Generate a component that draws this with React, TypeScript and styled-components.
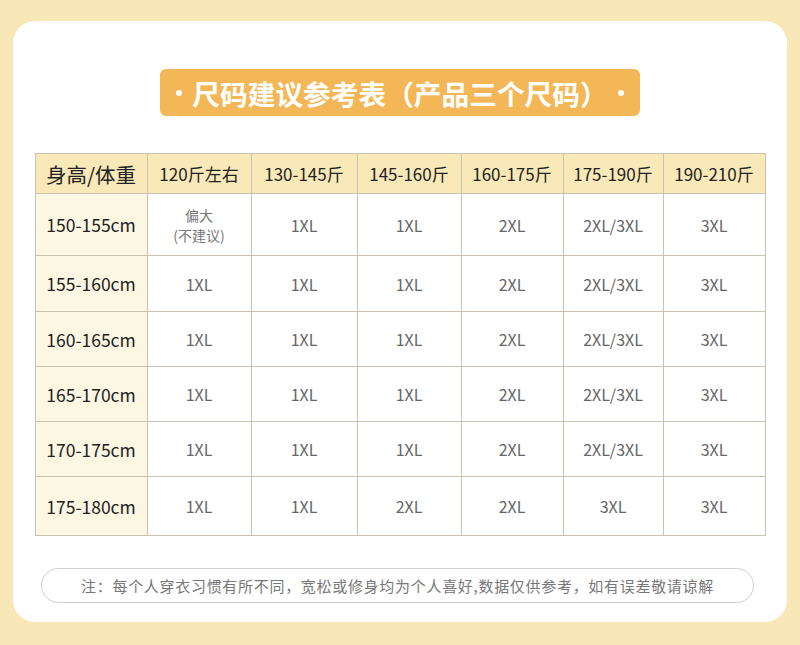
import React from 'react';
import styled, { createGlobalStyle } from 'styled-components';

const GlobalStyle = createGlobalStyle`
  html, body {
    margin: 0;
    padding: 0;
    background: #f8e7b7;
  }
  body {
    font-family: "Noto Sans CJK SC", "Noto Sans", sans-serif;
  }
`

const Page = styled.div`
  width: 800px;
  height: 645px;
  box-sizing: border-box;
  padding: 21px 13px 23px;
  background: #f8e7b7;
`

const Card = styled.div`
  height: 601px;
  box-sizing: border-box;
  background: #fff;
  border-radius: 22px;
  padding: 48px 22px 0;
  display: flex;
  flex-direction: column;
  align-items: center;
`

const Badge = styled.div`
  width: 480px;
  height: 47px;
  box-sizing: border-box;
  background: #f4b757;
  border-radius: 6px;
  color: #fff;
  font-size: 27.7px;
  font-weight: 700;
  display: flex;
  align-items: center;
  justify-content: center;
  gap: 10px;
  margin-bottom: 37px;
`

const Dot = styled.span`
  width: 6px;
  height: 6px;
  border-radius: 50%;
  background: #fff;
  flex: none;
`

const Table = styled.table`
  border-collapse: collapse;
  table-layout: fixed;
  width: 730px;
  margin-bottom: 32px;
`

const HeadCell = styled.th<{ $main?: boolean }>`
  height: 39px;
  padding: 0;
  background: #f9e8b8;
  border: 1px solid #c9c2b3;
  color: #222;
  font-weight: 400;
  font-size: ${(p) => (p.$main ? '20.5px' : '17px')};
  text-align: center;
  white-space: nowrap;
`

const RowHead = styled.td`
  padding: 0;
  background: #fbf7e3;
  border: 1px solid #c9c2b3;
  color: #222;
  font-size: 17.5px;
  text-align: center;
  white-space: nowrap;
`

const Cell = styled.td`
  padding: 0;
  border: 1px solid #c9c2b3;
  color: #666;
  font-size: 16px;
  text-align: center;
  white-space: nowrap;
`

const SmallNote = styled.div`
  font-size: 14px;
  line-height: 20px;
  color: #777;
`

const Note = styled.div`
  align-self: stretch;
  margin: 0 11px 0 6px;
  height: 35px;
  box-sizing: border-box;
  border: 1px solid #cfcfcf;
  border-radius: 18px;
  display: flex;
  align-items: center;
  justify-content: center;
  color: #777;
  font-size: 15px;
  letter-spacing: 0.7px;
`

const widths = [112, 104, 106, 104, 102, 100, 102]
const heads = ['身高/体重', '120斤左右', '130-145斤', '145-160斤', '160-175斤', '175-190斤', '190-210斤']

const rows: { h: string; height: number; sizes: string[] }[] = [
  { h: '150-155cm', height: 62, sizes: ['', '1XL', '1XL', '2XL', '2XL/3XL', '3XL'] },
  { h: '155-160cm', height: 56, sizes: ['1XL', '1XL', '1XL', '2XL', '2XL/3XL', '3XL'] },
  { h: '160-165cm', height: 55, sizes: ['1XL', '1XL', '1XL', '2XL', '2XL/3XL', '3XL'] },
  { h: '165-170cm', height: 55, sizes: ['1XL', '1XL', '1XL', '2XL', '2XL/3XL', '3XL'] },
  { h: '170-175cm', height: 55, sizes: ['1XL', '1XL', '1XL', '2XL', '2XL/3XL', '3XL'] },
  { h: '175-180cm', height: 59, sizes: ['1XL', '1XL', '2XL', '2XL', '3XL', '3XL'] },
]

export default function App() {
  return (
    <Page>
      <GlobalStyle />
      <Card>
        <Badge>
          <Dot />
          <span>尺码建议参考表（产品三个尺码）</span>
          <Dot />
        </Badge>
        <Table>
          <colgroup>
            {widths.map((w, i) => <col key={i} style={{ width: w }} />)}
          </colgroup>
          <thead>
            <tr>
              {heads.map((t, i) => <HeadCell key={t} $main={i === 0}>{t}</HeadCell>)}
            </tr>
          </thead>
          <tbody>
            {rows.map((r) => (
              <tr key={r.h} style={{ height: r.height }}>
                <RowHead>{r.h}</RowHead>
                {r.sizes.map((s, i) => (
                  <Cell key={i}>
                    {s || (
                      <SmallNote>
                        偏大
                        <br />
                        (不建议)
                      </SmallNote>
                    )}
                  </Cell>
                ))}
              </tr>
            ))}
          </tbody>
        </Table>
        <Note>注：每个人穿衣习惯有所不同，宽松或修身均为个人喜好,数据仅供参考，如有误差敬请谅解</Note>
      </Card>
    </Page>
  );
}
